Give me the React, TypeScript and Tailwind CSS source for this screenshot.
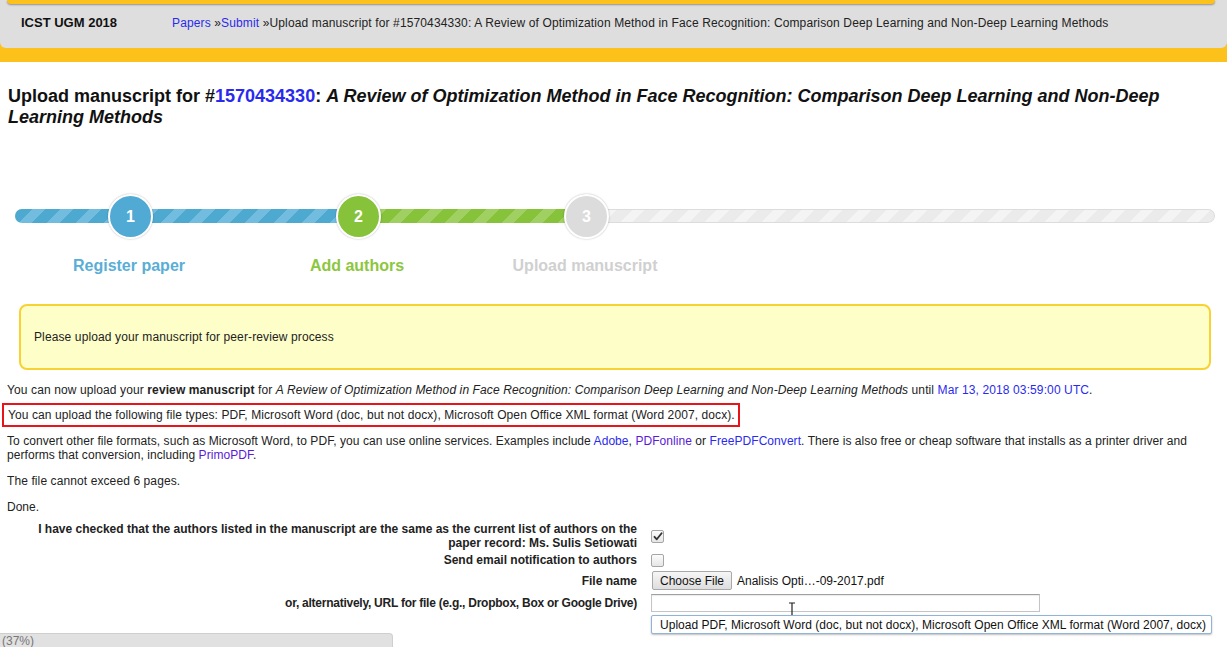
import React from "react";

const F = { fontFamily: '"Liberation Sans", Arial, Helvetica, sans-serif' };

function CheckBox({ checked }: { checked?: boolean }) {
  return (
    <div className="w-[13px] h-[13px] rounded-[2px] border border-[#a6a6a6] bg-[linear-gradient(#fcfcfc,#e6e6e6)] flex items-center justify-center">
      {checked && (
        <svg width="10" height="9" viewBox="0 0 10 9">
          <path d="M1.5 4.8 L3.8 7.3 L8.6 1.2" fill="none" stroke="#333" strokeWidth="1.8" strokeLinecap="round" strokeLinejoin="round" />
        </svg>
      )}
    </div>
  );
}

export default function App() {
  return (
    <div className="w-[1227px] h-[647px] overflow-hidden bg-white text-[#111] relative" style={F}>
      {/* header */}
      <div className="h-[62px] bg-[#fcc21b]">
        <div className="h-[48px] bg-[#dedede] rounded-bl-[6px] rounded-br-[6px] flex flex-col">
          <div className="h-[4px] ml-[7px] mr-[12px] bg-[#fcc21b] rounded-b-[5px] shadow-[0_1px_2px_rgba(0,0,0,0.35)]" />
          <div className="flex items-center h-[38px]">
            <div className="ml-[21px] w-[151px] text-[13px] font-bold text-[#111]">ICST UGM 2018</div>
            <div className="text-[12px] text-[#222] tracking-[0.13px]">
              <span className="text-[#2a2aee]">Papers</span> »<span className="text-[#2a2aee]">Submit</span> »Upload manuscript for #1570434330: A Review of Optimization Method in Face Recognition: Comparison Deep Learning and Non-Deep Learning Methods
            </div>
          </div>
        </div>
      </div>

      <div className="px-[7px]">
        <h1 className="mt-[24px] ml-[1px] text-[18px] leading-[21px] font-bold text-[#111]">
          Upload manuscript for #<span className="text-[#2a2aee]">1570434330</span>: <i>A Review of Optimization Method in Face Recognition: Comparison Deep Learning and Non-Deep Learning Methods</i>
        </h1>

        {/* progress */}
        <div className="relative mt-[66px] ml-[8px] w-[1200px] h-[44px]">
          <div className="absolute left-0 right-0 top-[15px] h-[14px] flex rounded-full overflow-hidden shadow-[inset_0_1px_2px_rgba(0,0,0,0.15)]">
            <div className="w-[343px] h-full bg-[repeating-linear-gradient(-45deg,#4ea9d1_0px,#4ea9d1_11px,#72bce0_11px,#72bce0_20px)]" />
            <div className="w-[228px] h-full bg-[repeating-linear-gradient(-45deg,#86c23a_0px,#86c23a_11px,#a0d062_11px,#a0d062_20px)]" />
            <div className="flex-1 h-full bg-[repeating-linear-gradient(-45deg,#ebebeb_0px,#ebebeb_11px,#f4f4f4_11px,#f4f4f4_20px)] border border-[#dcdcdc] rounded-r-full" />
          </div>
          <div className="absolute left-[93px] top-0 w-[45px] h-[45px] rounded-full bg-[#50aad3] border-2 border-white shadow-[0_0_2px_rgba(0,0,0,0.3)] flex items-center justify-center text-white font-bold text-[16px]">1</div>
          <div className="absolute left-[321px] top-0 w-[45px] h-[45px] rounded-full bg-[#86c23a] border-2 border-white shadow-[0_0_2px_rgba(0,0,0,0.3)] flex items-center justify-center text-white font-bold text-[16px]">2</div>
          <div className="absolute left-[549px] top-0 w-[45px] h-[45px] rounded-full bg-[#dcdcdc] border-2 border-white shadow-[0_0_2px_rgba(0,0,0,0.3)] flex items-center justify-center text-white font-bold text-[16px]">3</div>
        </div>

        <div className="flex mt-[18px] ml-[22px] gap-[28px] text-[16px] leading-[20px] font-bold">
          <div className="w-[200px] text-center text-[#5aaed6]">Register paper</div>
          <div className="w-[200px] text-center text-[#8dc63f]">Add authors</div>
          <div className="w-[200px] text-center text-[#d0d0d0]">Upload manuscript</div>
        </div>

        <div className="mt-[28px] ml-[12px] w-[1192px] h-[66px] border-2 border-[#f8d232] rounded-[8px] bg-[#fefec9] flex items-center pl-[13px] text-[12px] text-[#222] tracking-[0.12px]">
          Please upload your manuscript for peer-review process
        </div>

        <div className="text-[12px] leading-[14px] text-[#222]">
          <p className="mt-[13px] tracking-[0.11px]">
            You can now upload your <b>review manuscript</b> for <i>A Review of Optimization Method in Face Recognition: Comparison Deep Learning and Non-Deep Learning Methods</i> until <span className="text-[#2a2aee]">Mar 13, 2018 03:59:00 UTC</span>.
          </p>
          <div className="mt-[6px] -ml-[5px] w-[738px] h-[24px] border-2 border-[#e8141c] flex items-center pl-[4px] tracking-[0.09px]">
            You can upload the following file types: PDF, Microsoft Word (doc, but not docx), Microsoft Open Office XML format (Word 2007, docx).
          </div>
          <p className="mt-[7px] tracking-[0.06px]">
            To convert other file formats, such as Microsoft Word, to PDF, you can use online services. Examples include <span className="text-[#2a2aee]">Adobe</span>, <span className="text-[#5a1ad8]">PDFonline</span> or <span className="text-[#2a2aee]">FreePDFConvert</span>. There is also free or cheap software that installs as a printer driver and performs that conversion, including <span className="text-[#5a1ad8]">PrimoPDF</span>.
          </p>
          <p className="mt-[12px] tracking-[0.1px]">The file cannot exceed 6 pages.</p>
          <p className="mt-[12px]">Done.</p>

          {/* form */}
          <div className="mt-[8px] ml-[30px] grid grid-cols-[600px_1fr] gap-x-[14px] font-bold">
            <div className="text-right">
              I have checked that the authors listed in the manuscript are the same as the current list of authors on the paper record: Ms. Sulis Setiowati
            </div>
            <div className="flex items-center">
              <CheckBox checked />
            </div>

            <div className="text-right mt-[3px] h-[14px]">Send email notification to authors</div>
            <div className="flex items-center mt-[3px]">
              <CheckBox />
            </div>

            <div className="text-right mt-[4px] h-[19px] flex items-center justify-end">File name</div>
            <div className="flex items-center mt-[4px] h-[19px] font-normal">
              <div className="ml-[1px] w-[80px] h-[19px] rounded-[2px] border border-[#a9a9a9] bg-[linear-gradient(#f6f6f6,#dedede)] flex items-center justify-center text-[12px] text-[#111]">Choose File</div>
              <span className="ml-[5px] text-[#111]">Analisis Opti…-09-2017.pdf</span>
            </div>

            <div className="text-right mt-[4px] h-[18px] flex items-center justify-end tracking-[-0.25px]">or, alternatively, URL for file (e.g., Dropbox, Box or Google Drive)</div>
            <div className="relative mt-[4px] h-[18px] font-normal">
              <div className="w-[389px] h-[18px] border border-[#c4c4c4] border-t-[#a0a0a0] bg-white shadow-[inset_0_1px_1px_rgba(0,0,0,0.08)]" />
              <svg className="absolute left-[137px] top-[8px]" width="8" height="16" viewBox="0 0 8 16">
                <path d="M1 1 H7 M4 1 V15 M1 15 H7" stroke="#222" strokeWidth="1.2" fill="none" />
              </svg>
              <div className="absolute left-0 top-[21px] w-[561px] h-[19px] border border-[#8fb3d9] rounded-[2px] bg-white shadow-[0_1px_2px_rgba(0,0,0,0.25)] flex items-center pl-[8px] text-[12px] text-[#111] whitespace-nowrap tracking-[0.03px]">
                Upload PDF, Microsoft Word (doc, but not docx), Microsoft Open Office XML format (Word 2007, docx)
              </div>
            </div>
          </div>
        </div>
      </div>

      {/* browser status bar */}
      <div className="absolute left-0 bottom-0 w-[393px] h-[14px] bg-[#e1e1e1] rounded-tr-[4px] border-t border-r border-[#cfcfcf] text-[12px] leading-[14px] text-[#777] pl-[2px]">
        (37%)
      </div>
    </div>
  );
}
